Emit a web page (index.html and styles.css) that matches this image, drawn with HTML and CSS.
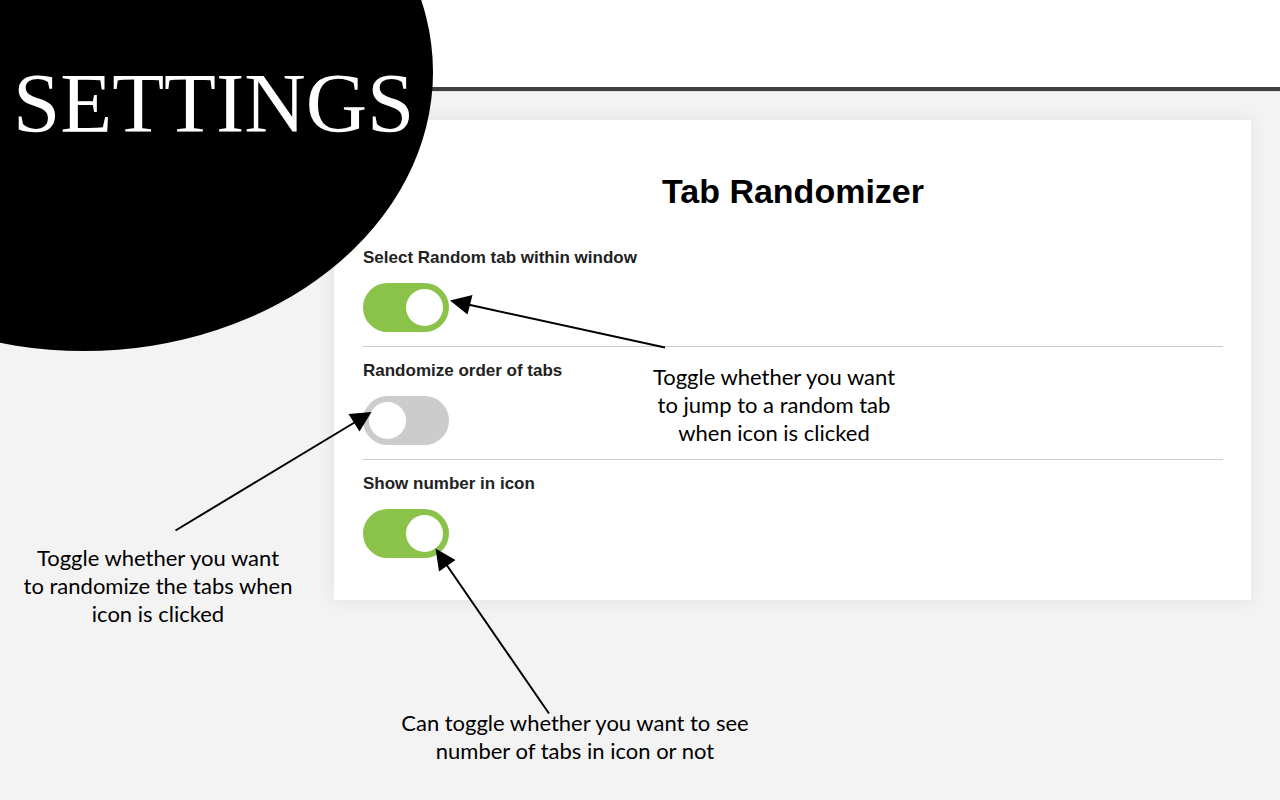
FILE: index.html
```html
<!DOCTYPE html>
<html lang="en">
<head>
<meta charset="utf-8">
<meta name="viewport" content="width=device-width, initial-scale=1">
<title>Tab Randomizer Settings</title>
<link rel="stylesheet" href="styles.css">
</head>
<body>
<header class="topbar"></header>
<main class="card">
  <h1 class="card-title">Tab Randomizer</h1>
  <div class="setting">
    <label class="setting-label" for="within-window">Select Random tab within window</label>
    <input class="toggle" type="checkbox" id="within-window" checked>
  </div>
  <div class="setting">
    <label class="setting-label" for="random-order">Randomize order of tabs</label>
    <input class="toggle" type="checkbox" id="random-order">
  </div>
  <div class="setting">
    <label class="setting-label" for="show-number">Show number in icon</label>
    <input class="toggle" type="checkbox" id="show-number" checked>
  </div>
</main>

<div class="blob"></div>
<h2 class="banner">SETTINGS</h2>

<svg class="arrows" width="1280" height="800" viewBox="0 0 1280 800" fill="#000" stroke="#000" stroke-width="2" aria-hidden="true">
  <path d="M665 347.500L468 304.500M175.500 530.500L357 421M549 713.500L446 564"/>
  <path stroke="none" d="M450 300.500L472.500 295L467.500 314.500ZM371.500 412L348.500 414L359.500 431.500ZM435.500 548.500L455.500 560L439 571.500Z"/>
</svg>
<p class="note note-window">Toggle whether you want<br>to jump to a random tab<br>when icon is clicked</p>
<p class="note note-order">Toggle whether you want<br>to randomize the tabs when<br>icon is clicked</p>
<p class="note note-number">Can toggle whether you want to see<br>number of tabs in icon or not</p>
</body>
</html>
```
FILE: styles.css
```css
* {
  box-sizing: border-box;
}

body {
  margin: 0;
  min-height: 100vh;
  position: relative;
  overflow-x: hidden;
  background: #f3f3f3;
  font-family: "Liberation Sans", Arial, sans-serif;
}

.topbar {
  height: 91px;
  background: #fff;
  border-bottom: 4px solid #404040;
  box-shadow: 0 1px 0 #dcdcdc;
}

.card {
  margin: 29px 29px 0 334px;
  padding: 51px 28px 28px 29px;
  background: #fff;
  box-shadow: 0 0 20px rgba(0, 0, 0, 0.08);
}

.card-title {
  margin: 0 0 23px;
  font-size: 34px;
  line-height: 40px;
  text-align: center;
  color: #000;
}

.setting {
  display: flex;
  flex-direction: column;
  align-items: flex-start;
  gap: 15px;
  padding: 14px 0;
  border-bottom: 1px solid #ccc;
}

.setting:last-child {
  border-bottom: 0;
}

.setting-label {
  font-size: 17px;
  line-height: 20px;
  font-weight: bold;
  color: #222;
}

.toggle {
  appearance: none;
  display: flex;
  align-items: center;
  width: 86px;
  height: 49px;
  margin: 0;
  padding: 0 6px;
  border-radius: 25px;
  background: #ccc;
  cursor: pointer;
}

.toggle::before {
  content: "";
  width: 37px;
  height: 37px;
  border-radius: 50%;
  background: #fff;
}

.toggle:checked {
  justify-content: flex-end;
  background: #8bc34a;
}

.blob {
  position: absolute;
  left: 0;
  top: 0;
  width: 433px;
  height: 351px;
  background: #000;
  clip-path: ellipse(349px 279px at 84px 72px);
}

.banner {
  position: absolute;
  left: 13px;
  top: 55px;
  margin: 0;
  font-family: "Liberation Serif", "Times New Roman", serif;
  font-size: 85px;
  line-height: 96px;
  font-weight: normal;
  color: #fff;
}

.arrows {
  position: absolute;
  left: 0;
  top: 0;
  pointer-events: none;
}

.note {
  position: absolute;
  margin: 0;
  font-family: Lato, "Noto Sans", sans-serif;
  font-size: 22px;
  line-height: 28px;
  text-align: center;
  white-space: nowrap;
  color: #000;
  transform: translateX(-50%);
}

.note-window {
  left: 774px;
  top: 363px;
}

.note-order {
  left: 158px;
  top: 544px;
}

.note-number {
  left: 575px;
  top: 709px;
}
```
